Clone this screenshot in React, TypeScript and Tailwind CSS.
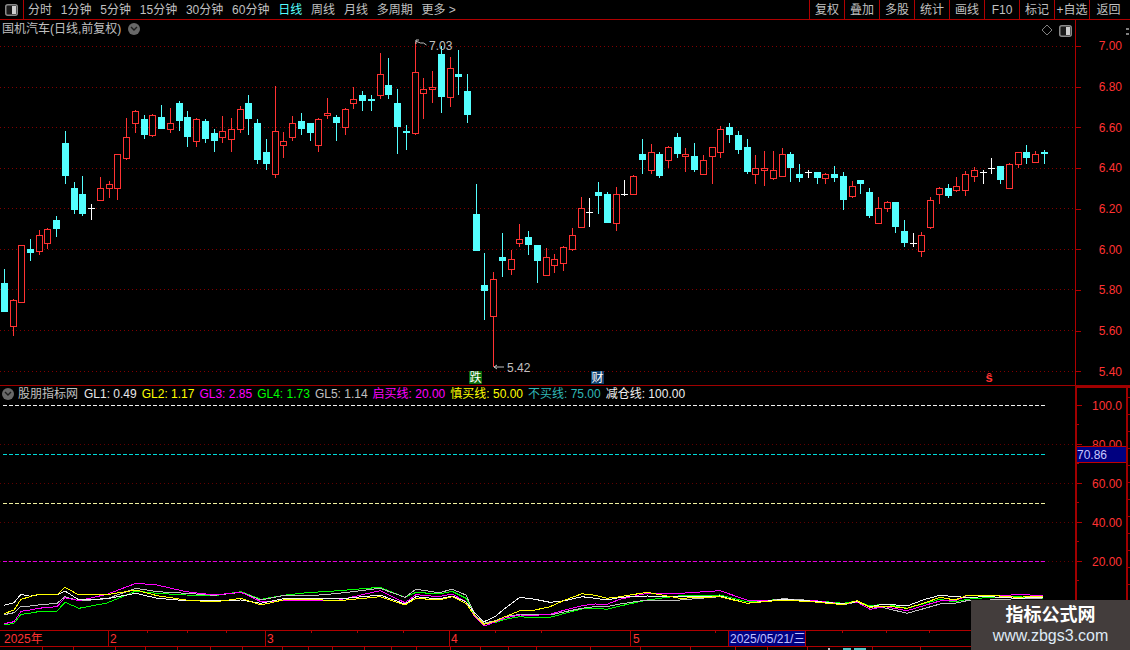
import React from "react";

type Kind = "r" | "c" | "w";
type Candle = [number, Kind, number, number, number, number];

const candles: Candle[] = [
  [4,"c",269,283,312,312],[13,"r",299,300,327,336],[21,"r",245,245,303,303],[30,"c",239,249,253,261],
  [39,"r",230,235,252,255],[47,"r",228,229,244,249],[56,"c",216,220,229,237],[65,"c",131,143,176,184],
  [74,"c",182,188,210,214],[82,"c",176,194,214,216],[91,"w",204,208,208,220],[100,"r",177,188,201,201],
  [109,"r",181,184,189,198],[117,"r",154,154,189,200],[126,"r",118,137,159,160],[135,"r",110,111,124,133],
  [144,"c",115,119,135,139],[152,"r",114,115,136,137],[161,"c",105,117,129,129],[170,"r",108,123,130,133],
  [179,"c",101,103,121,131],[187,"c",111,117,137,147],[196,"r",118,119,142,147],[205,"c",119,121,139,143],
  [214,"c",129,133,141,152],[222,"r",116,131,138,143],[231,"r",118,129,140,152],[240,"r",106,109,130,133],
  [248,"c",95,103,119,135],[257,"c",119,123,160,164],[266,"c",139,152,164,170],[275,"r",86,131,175,178],
  [283,"r",132,141,146,158],[292,"r",116,123,138,141],[301,"c",113,121,129,135],[310,"c",123,123,133,141],
  [318,"r",118,119,146,152],[327,"r",98,113,116,119],[336,"c",115,117,123,141],[345,"r",108,109,128,135],
  [353,"r",87,99,104,109],[362,"c",91,95,101,111],[371,"c",95,99,101,111],[380,"r",53,74,96,99],
  [388,"c",58,85,95,99],[397,"c",89,103,127,154],[406,"c",125,131,133,150],[415,"r",42,72,134,135],
  [423,"r",78,89,94,119],[432,"r",71,87,90,103],[441,"c",46,54,97,113],[450,"r",57,68,98,107],
  [458,"c",50,74,77,95],[467,"c",74,91,115,123],[476,"c",184,214,251,251],[484,"c",253,285,291,320],
  [493,"r",272,279,317,367],[502,"c",233,257,261,277],[511,"r",250,259,270,275],[519,"r",224,239,244,247],
  [528,"c",231,237,245,255],[537,"c",245,245,261,283],[546,"r",248,257,276,276],[554,"r",254,259,266,273],
  [563,"r",246,247,264,271],[572,"r",228,235,250,251],[581,"r",197,208,228,228],[589,"w",198,212,212,227],
  [598,"c",182,192,196,214],[607,"c",192,194,223,223],[616,"r",187,194,224,231],[624,"w",180,194,194,196],
  [633,"r",175,176,195,195],[642,"c",139,154,160,174],[651,"r",144,152,171,174],[659,"c",152,154,176,178],
  [668,"r",146,147,161,168],[677,"c",133,137,154,158],[685,"r",148,154,157,172],[694,"c",143,156,170,172],
  [703,"r",155,160,175,175],[712,"r",147,147,157,184],[720,"r",126,129,153,158],[729,"c",123,127,135,143],
  [738,"c",131,135,150,154],[747,"c",139,147,172,174],[755,"r",155,168,175,184],[764,"r",151,168,171,186],
  [773,"r",151,170,179,180],[782,"r",148,154,177,177],[790,"c",152,154,168,182],[799,"c",164,174,178,182],
  [808,"w",170,172,172,178],[817,"c",172,172,178,184],[825,"r",173,174,179,184],[834,"c",166,174,178,182],
  [843,"c",172,176,200,210],[852,"r",181,186,197,198],[860,"c",180,180,184,194],[869,"c",188,192,216,218],
  [878,"r",197,208,224,224],[887,"r",201,202,209,212],[895,"c",202,202,227,233],[904,"c",220,231,243,247],
  [913,"w",233,243,243,247],[921,"r",232,235,252,257],[930,"r",197,200,228,229],[939,"r",187,188,195,204],
  [948,"c",184,188,196,198],[956,"r",177,186,191,192],[965,"r",171,174,191,196],[974,"r",167,170,177,182],
  [983,"w",170,172,172,184],[991,"w",158,168,168,174],[1000,"c",166,166,180,184],[1009,"r",163,164,189,189],
  [1018,"r",152,152,165,168],[1026,"c",145,152,158,164],[1035,"r",151,154,163,163],[1044,"c",150,152,154,164],
];

// x, then white, yellow, gray, magenta, green as (y - 580) * 3
const glRows: number[][] = [
  [4,76,101,104,131,135],[14,68,90,98,125,130],[21,43,58,79,94,103],[30,49,50,78,90,100],[38,44,43,75,85,95],
  [57,44,44,70,80,93],[65,33,22,50,53,67],[79,60,45,63,62,85],[107,56,44,56,43,69],[136,40,30,25,10,33],
  [157,55,47,35,15,40],[186,62,60,40,35,45],[214,62,66,46,45,47],[241,60,55,37,37,35],[261,70,75,60,65,58],
  [286,55,58,45,62,45],[307,55,58,48,60,38],[339,57,62,40,60,32],[380,45,50,25,32,22],[405,72,75,52,68,52],
  [416,50,55,28,44,37],[439,57,60,38,50,42],[452,48,50,28,42,34],[466,65,70,45,65,55],[475,100,108,105,112,108],
  [484,125,133,130,138,132],[495,110,124,122,126,128],[505,85,110,110,114,118],[520,52,92,103,105,110],
  [535,58,90,104,106,114],[550,67,80,105,103,112],[565,62,60,95,90,100],[582,50,41,85,77,87],[595,55,46,80,72,84],
  [607,60,55,80,73,88],[620,52,50,72,58,78],[647,48,37,60,40,60],[680,50,55,60,40,47],[720,48,50,50,32,45],
  [747,70,70,70,60,65],[783,58,60,56,60,58],[815,64,66,62,62,62],[843,72,74,74,72,70],[857,65,62,66,66,63],
  [870,80,82,80,88,78],[885,72,78,84,80,72],[907,78,85,100,92,85],[925,58,68,85,76,70],[940,46,52,72,63,58],
  [955,50,60,70,62,66],[967,52,46,62,47,58],[990,50,46,60,48,52],[1017,55,52,56,44,50],[1043,52,48,54,46,55],
];
const glColors = ["#f4f4f4", "#ffff00", "#c0c0c0", "#ff00ff", "#00ff00"];
const glPoints = (col: number) =>
  glRows.map((r) => `${r[0]},${(580 + r[col + 1] / 3).toFixed(1)}`).join(" ");

const upperGrid = [46.5, 87.5, 127.5, 168.5, 208.5, 249.5, 289.5, 330.5, 371.5];
const upperLabels = ["7.00", "6.80", "6.60", "6.40", "6.20", "6.00", "5.80", "5.60", "5.40"];
const lowerLabels = ["100.0", "80.00", "60.00", "40.00", "20.00"];
const tabs = ["分时", "1分钟", "5分钟", "15分钟", "30分钟", "60分钟", "日线", "周线", "月线", "多周期", "更多 >"];
const rightButtons = ["复权", "叠加", "多股", "统计", "画线", "F10", "标记", "+自选"];
const legend: [string, string][] = [
  ["GL1: 0.49", "text-[#e8e8e8]"],
  ["GL2: 1.17", "text-[#ffff00]"],
  ["GL3: 2.85", "text-[#ff00ff]"],
  ["GL4: 1.73", "text-[#00ff00]"],
  ["GL5: 1.14", "text-[#c0c0c0]"],
  ["启买线: 20.00", "text-[#ff00ff]"],
  ["慎买线: 50.00", "text-[#ffff00]"],
  ["不买线: 75.00", "text-[#30b8b8]"],
  ["减仓线: 100.00", "text-[#f0f0f0]"],
];
const dashLines: [number, string][] = [
  [405.5, "#f0f0f0"],
  [454.5, "#00d8d8"],
  [503.5, "#f0f0a0"],
  [561.5, "#e000e0"],
];
const timeTicks = [147, 187, 226, 311, 357, 403, 495, 541, 715, 842, 886, 929];
const stripTicks = [42, 73, 115, 145, 177, 210, 242, 282, 308, 332, 364, 391, 416, 450, 480, 508, 536, 590, 640, 690, 735, 767, 807, 872, 920];

function Chevron() {
  return (
    <span className="flex h-[12px] w-[12px] items-center justify-center rounded-full bg-[#686868]">
      <svg width="8" height="6" viewBox="0 0 8 6" fill="none" stroke="#1c1c1c" strokeWidth="1.4">
        <path d="M1 1l3 3 3-3" />
      </svg>
    </span>
  );
}

function PanelToggle() {
  return (
    <svg width="13" height="12" viewBox="0 0 13 12">
      <rect x="0.75" y="0.75" width="11.5" height="10.5" rx="2" fill="#1a1a1a" stroke="#8a8a8a" strokeWidth="1.5" />
      <rect x="7" y="2" width="4" height="8" fill="#d0d0d0" />
    </svg>
  );
}

function Candles() {
  return (
    <g shapeRendering="crispEdges">
      {candles.map(([x, k, wt, bt, bb, wb], i) => {
        const color = k === "r" ? "#ff3232" : k === "c" ? "#54ffff" : "#ffffff";
        return (
          <g key={i}>
            <rect x={x} y={wt} width="1" height={wb - wt} fill={color} />
            {k === "c" && <rect x={x - 3} y={bt} width="7" height={bb - bt} fill={color} />}
            {k === "w" && <rect x={x - 3} y={bt} width="7" height="1" fill={color} />}
            {k === "r" && (
              <rect x={x - 2.5} y={bt + 0.5} width="6" height={bb - bt - 1} fill="#000" stroke={color} strokeWidth="1" />
            )}
          </g>
        );
      })}
    </g>
  );
}

export default function App() {
  const font = { fontFamily: '"Liberation Sans","Noto Sans CJK SC",sans-serif' };
  return (
    <div style={font} className="relative flex h-[650px] w-[1130px] flex-col overflow-hidden bg-black text-[12px] leading-none text-[#c0c0c0]">
      {/* toolbar */}
      <div className="flex h-[20px] shrink-0 items-stretch border-b border-[#b00000]">
        <div className="flex w-[24px] items-center justify-center border-r border-[#b00000] pr-[1px]">
          <PanelToggle />
        </div>
        <div className="flex items-center gap-[8.8px] pl-[4px]">
          {tabs.map((t) => (
            <span key={t} className={t === "日线" ? "text-[#54ffff]" : ""}>{t}</span>
          ))}
        </div>
        <div className="ml-auto flex">
          {rightButtons.map((b) => (
            <span key={b} className="flex w-[35px] items-center justify-center whitespace-nowrap border-l border-[#b00000]">{b}</span>
          ))}
          <span className="flex w-[41px] items-center justify-center border-l border-[#b00000] pr-[3px]">返回</span>
        </div>
      </div>

      {/* price panel */}
      <div className="flex h-[366px] shrink-0 border-b border-[#a00000]">
        <div className="relative w-[1075px] shrink-0">
          <svg className="absolute inset-0" width="1075" height="365" viewBox="0 20 1075 365">
            {upperGrid.map((y) => (
              <line key={y} x1="0" x2="1075" y1={y} y2={y} stroke="#800000" strokeDasharray="1 3" shapeRendering="crispEdges" />
            ))}
            <Candles />
            <g stroke="#c0c0c0" fill="none" strokeWidth="1">
              <path d="M416 44V40h3M415.5 41l5 2 3 0 3 2" />
              <path d="M494 367h10M494 367l3-2M494 367l3 2" />
            </g>
            <g fill="#c0c0c0" fontSize="12">
              <text x="429" y="50">7.03</text>
              <text x="507" y="372">5.42</text>
            </g>
            <rect x="469" y="371" width="13" height="13" fill="#0a6a0a" />
            <rect x="591" y="371" width="13" height="13" fill="#10406e" />
            <g fill="#ffffff" fontSize="12" textAnchor="middle">
              <text x="475.5" y="382">跌</text>
              <text x="597.5" y="382">财</text>
            </g>
            <text x="989" y="382" fill="#ff3232" fontSize="13" fontWeight="700" textAnchor="middle">ŝ</text>
            <path d="M1047 25l5 5-5 5-5-5z" fill="none" stroke="#808080" />
          </svg>
          <div className="relative flex h-[18px] items-center gap-[7px] pl-[2px]">
            <span>国机汽车(日线,前复权)</span>
            <Chevron />
          </div>
          <div className="absolute right-[3px] top-[5px]">
            <PanelToggle />
          </div>
        </div>
        <div className="flex w-[55px] border-l border-[#b00000]">
          <div className="flex w-[50px] flex-col pt-[6px] text-[#ff3232]">
            {upperLabels.map((l) => (
              <div key={l} className="flex h-[40.7px] shrink-0 items-center justify-between pr-[4px]">
                <span className="h-px w-[5px] bg-[#b00000]" />
                <span>{l}</span>
              </div>
            ))}
          </div>
          <div className="flex flex-1 flex-col pt-[8px]">
            <span className="h-[2px] w-[3px] bg-[#808080]" />
            <span className="mt-[3px] h-[2px] w-[3px] bg-[#808080]" />
          </div>
        </div>
      </div>

      {/* indicator panel */}
      <div className="flex h-[244px] shrink-0">
        <div className="relative w-[1075px] shrink-0">
          <svg className="absolute inset-0" width="1075" height="244" viewBox="0 386 1075 244">
            {[444.5, 483.5, 522.5, 561.5].map((y) => (
              <line key={y} x1="0" x2="1075" y1={y} y2={y} stroke="#600000" strokeDasharray="1 3" shapeRendering="crispEdges" />
            ))}
            {dashLines.map(([y, c]) => (
              <line key={y} x1="3" x2="1045" y1={y} y2={y} stroke={c} strokeDasharray="4 2" shapeRendering="crispEdges" />
            ))}
            {[4, 2, 3, 0, 1].map((c) => (
              <polyline key={c} points={glPoints(c)} fill="none" stroke={glColors[c]} strokeWidth="1" shapeRendering="crispEdges" />
            ))}
          </svg>
          <div className="relative flex h-[15px] items-center pl-[2px] pt-[1px]">
            <Chevron />
            <span className="ml-[4px] w-[66px] shrink-0">股朋指标网</span>
            <div className="flex gap-[5px] whitespace-nowrap">
              {legend.map(([t, c]) => (
                <span key={t} className={c}>{t}</span>
              ))}
            </div>
          </div>
        </div>
        <div className="relative flex w-[55px] border-l-2 border-t-2 border-[#a00000]">
          <div className="-mt-[2px] flex w-[49px] flex-col text-[#ff3232]">
            {lowerLabels.map((l) => (
              <div key={l} className="relative flex h-[39px] shrink-0 items-center justify-between pr-[4px]">
                <span className="h-px w-[5px] bg-[#b00000]" />
                <span>{l}</span>
                <span className="absolute bottom-0 left-0 h-px w-[2px] bg-[#b00000]" />
              </div>
            ))}
          </div>
          <div className="flex flex-1 flex-col gap-[16px] border-l-2 border-[#a00000] pt-[9px]">
            {[0, 1, 2, 3, 4, 5, 6, 7, 8, 9, 10, 11].map((i) => (
              <span key={i} className="h-px w-[2px] bg-[#a00000]" />
            ))}
          </div>
          <div className="absolute left-0 top-[58px] flex h-[17px] w-[49px] items-center border-y border-[#c00000] bg-[#000080] text-[#c8c8ff]">
            70.86
          </div>
        </div>
      </div>

      {/* time axis */}
      <div className="relative flex h-[17px] shrink-0 border-y border-[#b00000] text-[#ff3232]">
        <span className="flex w-[108px] items-center pl-[4px]">2025年</span>
        <span className="flex w-[157px] items-center border-l border-[#b00000] pl-[1px]">2</span>
        <span className="flex w-[184px] items-center border-l border-[#b00000] pl-[1px]">3</span>
        <span className="flex w-[181px] items-center border-l border-[#b00000] pl-[1px]">4</span>
        <span className="flex w-[98px] items-center border-l border-[#b00000] pl-[2px]">5</span>
        <span className="flex w-[78px] items-center whitespace-nowrap border-x border-[#b00000] bg-[#000080] pl-[1px] text-[#c0c0ff]">2025/05/21/三</span>
        <svg className="absolute left-0 top-0" width="1130" height="3" shapeRendering="crispEdges">
          {timeTicks.map((x) => (
            <rect key={x} x={x} y="0" width="1" height="2" fill="#b00000" />
          ))}
        </svg>
      </div>
      <svg className="shrink-0" width="1130" height="3" shapeRendering="crispEdges">
        {stripTicks.map((x) => (
          <rect key={x} x={x} y="0" width="1" height="3" fill="#b00000" />
        ))}
        <rect x="828" y="1" width="2" height="2" fill="#c0c0c0" />
        <rect x="843" y="1" width="8" height="2" fill="#54c8c8" />
        <rect x="854" y="1" width="12" height="2" fill="#54c8c8" />
      </svg>

      {/* watermark */}
      <div className="absolute bottom-0 right-0 flex h-[50px] w-[159px] flex-col items-center justify-center gap-[4px] bg-[#433d3c]">
        <span className="text-[18px] font-bold text-white">指标公式网</span>
        <span className="text-[16px] text-[#dfeaf5]">www.zbgs3.com</span>
      </div>
    </div>
  );
}
